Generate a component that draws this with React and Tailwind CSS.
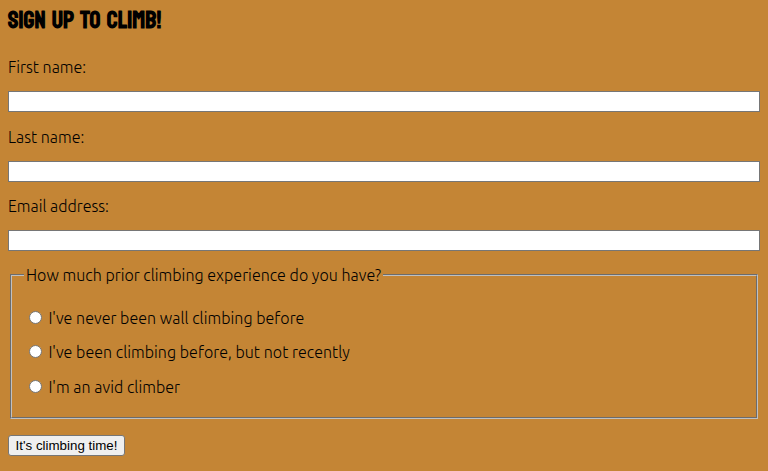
const fields = [
  { id: "first", label: "First name:", type: "text", gap: "h-[70px]" },
  { id: "last", label: "Last name:", type: "text", gap: "h-[69px]" },
  { id: "email", label: "Email address:", type: "email", gap: "h-[69px]" },
];

const options = [
  { id: "never", label: "I've never been wall climbing before", gap: "h-[34px]" },
  { id: "before", label: "I've been climbing before, but not recently", gap: "h-[35px]" },
  { id: "avid", label: "I'm an avid climber", gap: "h-[34px]" },
];

function Field({ id, label, type, gap }) {
  return (
    <div className={gap}>
      <label htmlFor={id} className="block h-[33px] leading-[18px] whitespace-nowrap">
        {label}
      </label>
      <input id={id} type={type} className="block h-[21px] w-full border border-[#767676] bg-white px-1 outline-none" />
    </div>
  );
}

function Option({ id, label, gap }) {
  return (
    <label className={`flex items-start ${gap}`}>
      <input
        id={id}
        type="radio"
        name="experience"
        className="mt-[2px] mr-[6.4px] h-[13px] w-[13px] appearance-none rounded-full border border-[#767676] bg-white checked:border-4"
      />
      <span className="leading-[18px] tracking-[0.04px] whitespace-nowrap">{label}</span>
    </label>
  );
}

export default function App() {
  return (
    <main className="h-[471px] overflow-hidden bg-[#c48535] px-2 pt-[7px] font-['Ubuntu','Open_Sans',sans-serif] text-base font-light text-black">
      <h1 className="h-[51px] font-['Koulen','Bebas_Neue',sans-serif] text-2xl leading-[27px] font-bold tracking-[0.05px] whitespace-nowrap">
        SIGN UP TO CLIMB!
      </h1>
      <form onSubmit={(event) => event.preventDefault()}>
        {fields.map((field) => (
          <Field key={field.id} {...field} />
        ))}
        <fieldset className="mx-[2px] h-[153px] border-2 border-[#c0c0c0] px-[17px] [border-style:groove]">
          <legend className="-ml-[5px] h-[18px] px-[2px] leading-[18px] tracking-[0.03px] whitespace-nowrap">
            How much prior climbing experience do you have?
          </legend>
          <div className="pt-[25px]">
            {options.map((option) => (
              <Option key={option.id} {...option} />
            ))}
          </div>
        </fieldset>
        <button type="submit" className="mt-4 block h-[21px] w-[117px] rounded-[3px] border border-[#767676] bg-[#efefef] font-['Liberation_Sans',sans-serif] text-[13.333px] leading-[19px] font-normal">
          It's climbing time!
        </button>
      </form>
    </main>
  );
}
